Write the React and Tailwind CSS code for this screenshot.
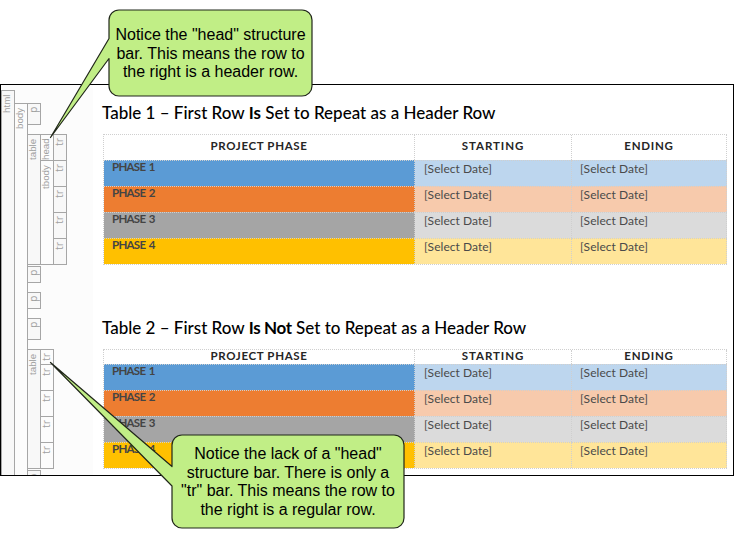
const LABEL =
  "relative right-px w-[12px] shrink-0 rotate-180 text-right leading-[12px] text-[#a0a0a0] [writing-mode:vertical-rl]";
const LONG_LABEL = "pb-[4px] text-[9.75px] font-['Liberation_Sans',Arial,sans-serif]";
const SHORT_LABEL = "pb-[3px] text-[10.5px] font-['Open_Sans','Noto_Sans',sans-serif]";

// One structure bar; nested bars share its right-hand line.
function Bar({ label, size = "", shade = "bg-[#f8f8f8]", open = false, children }) {
  return (
    <div className={`flex shrink-0 items-stretch ${size}`}>
      <div
        className={`box-border flex w-[14px] shrink-0 border border-[#a6a6a6] ${open ? "border-b-0" : ""} ${shade}`}
      >
        <span className={`${LABEL} ${label.length > 2 ? LONG_LABEL : SHORT_LABEL}`}>{label}</span>
      </div>
      {children && <div className="-ml-px flex flex-col">{children}</div>}
    </div>
  );
}

function StructurePane() {
  const tr = "-mt-px h-[27px]";
  return (
    <div className="h-full w-[92px] shrink-0 overflow-hidden bg-[#fcfcfc] pt-[5px]">
      <Bar label="html" size="h-[400px]" open>
        <div className="mt-[13px]">
          <Bar label="body" size="h-[390px]" shade="bg-[#fcfcfc]" open>
            <Bar label="p" size="h-[22px]" />
            <Bar label="table" size="mt-[9px] h-[131px]">
              <Bar label="head" size="h-[27px]" shade="bg-[#fcfcfc]">
                <Bar label="tr" size="h-[27px]" />
              </Bar>
              <Bar label="tbody" size="-mt-px h-[105px]" shade="bg-[#fcfcfc]">
                <Bar label="tr" size="h-[27px]" />
                <Bar label="tr" size={tr} />
                <Bar label="tr" size={tr} />
                <Bar label="tr" size={tr} />
              </Bar>
            </Bar>
            <Bar label="p" size="mt-[1px] h-[17px]" />
            <Bar label="p" size="mt-[9px] h-[17px]" />
            <Bar label="p" size="mt-[9px] h-[22px]" />
            <Bar label="table" size="mt-[9px] h-[120px]">
              <Bar label="tr" size="h-[16px]" shade="bg-[#fcfcfc]" />
              <Bar label="tr" size={tr} shade="bg-[#fcfcfc]" />
              <Bar label="tr" size={tr} shade="bg-[#fcfcfc]" />
              <Bar label="tr" size={tr} shade="bg-[#fcfcfc]" />
              <Bar label="tr" size={tr} shade="bg-[#fcfcfc]" />
            </Bar>
            <Bar label="p" size="mt-[1px] h-[22px]" />
          </Bar>
        </div>
      </Bar>
    </div>
  );
}

const PHASES = [
  { name: "PHASE 1", strong: "bg-[#5b9bd5]", light: "bg-[#bdd6ee]" },
  { name: "PHASE 2", strong: "bg-[#ed7d31]", light: "bg-[#f7caac]" },
  { name: "PHASE 3", strong: "bg-[#a5a5a5]", light: "bg-[#dbdbdb]" },
  { name: "PHASE 4", strong: "bg-[#ffc000]", light: "bg-[#ffe599]" },
];

const COLS = "grid grid-cols-[311px_157px_155px]";
const LINE = "border-dotted border-[#cfcfcf]";

function PhaseTable({ headSize }) {
  const head = `${LINE} border-r text-center text-[11.5px] font-bold text-[#262626]`;
  const date = `${LINE} border-r border-t text-[12px] leading-[16px] tracking-[0.05px] text-[#4a4a4a]`;
  return (
    <div className={`w-[624px] border-b border-l ${LINE} font-['Lato',sans-serif]`}>
      <div className={`${COLS} border-t ${LINE} ${headSize}`}>
        <div className={`${head} tracking-[0.65px]`}>PROJECT PHASE</div>
        <div className={`${head} tracking-[0.95px]`}>STARTING</div>
        <div className={`${head} tracking-[0.75px]`}>ENDING</div>
      </div>
      {PHASES.map((p) => (
        <div key={p.name} className={`${COLS} h-[26px]`}>
          <div
            className={`${LINE} ${p.strong} border-r border-t pl-[8px] text-[11.5px] font-bold leading-[12px] tracking-[-0.7px] text-[#444] [word-spacing:1.2px]`}
          >
            {p.name}
          </div>
          <div className={`${date} ${p.light} pl-[9px]`}>[Select Date]</div>
          <div className={`${date} ${p.light} pl-[8px]`}>[Select Date]</div>
        </div>
      ))}
    </div>
  );
}

const HEADING =
  "-ml-px whitespace-nowrap font-['Lato',sans-serif] text-[17px] font-medium leading-[22px] text-black";

export default function App() {
  return (
    <div className="relative h-[538px] w-[734px] overflow-hidden bg-white pt-[84px]">
      <div className="flex h-[392px] overflow-hidden border border-black">
        <StructurePane />
        <main className="flex flex-col pl-[10px] pt-[17px]">
          <h1 className={HEADING}>
            Table 1 – First Row <b>Is</b> Set to Repeat as a Header Row
          </h1>
          <div className="mt-[10px]">
            <PhaseTable headSize="h-[26px] leading-[22px]" />
          </div>
          <h1 className={`${HEADING} mt-[52px]`}>
            Table 2 – First Row <b className="tracking-[-0.35px]">Is Not</b> Set to Repeat as a Header Row
          </h1>
          <div className="mt-[10px]">
            <PhaseTable headSize="h-[15px] leading-[12px]" />
          </div>
        </main>
      </div>

      <svg className="absolute left-0 top-0" width="734" height="538" viewBox="0 0 734 538">
        <g fill="#c1ee86" stroke="#20261a" strokeWidth="1.2" strokeLinejoin="round">
          <path d="M119 10H302a10 10 0 0 1 10 10V86a10 10 0 0 1-10 10H119a10 10 0 0 1-10-10V58.500L50.500 137.500L109 38.500V20a10 10 0 0 1 10-10Z" />
          <path d="M182 435H394a10 10 0 0 1 10 10V518a10 10 0 0 1-10 10H182a10 10 0 0 1-10-10V486L50.500 362.500L172 466.500V445a10 10 0 0 1 10-10Z" />
        </g>
      </svg>
      <p className="absolute left-[109px] top-[26px] w-[203px] whitespace-nowrap text-center font-['Liberation_Sans',Arial,sans-serif] text-[16px] leading-[18.5px] text-black">
        Notice the "head" structure
        <br />
        bar. This means the row to
        <br />
        the right is a header row.
      </p>
      <p className="absolute left-[172px] top-[445px] w-[232px] whitespace-nowrap text-center font-['Liberation_Sans',Arial,sans-serif] text-[16px] leading-[18.5px] text-black">
        Notice the lack of a "head"
        <br />
        structure bar. There is only a
        <br />
        "tr" bar. This means the row to
        <br />
        the right is a regular row.
      </p>
    </div>
  );
}
